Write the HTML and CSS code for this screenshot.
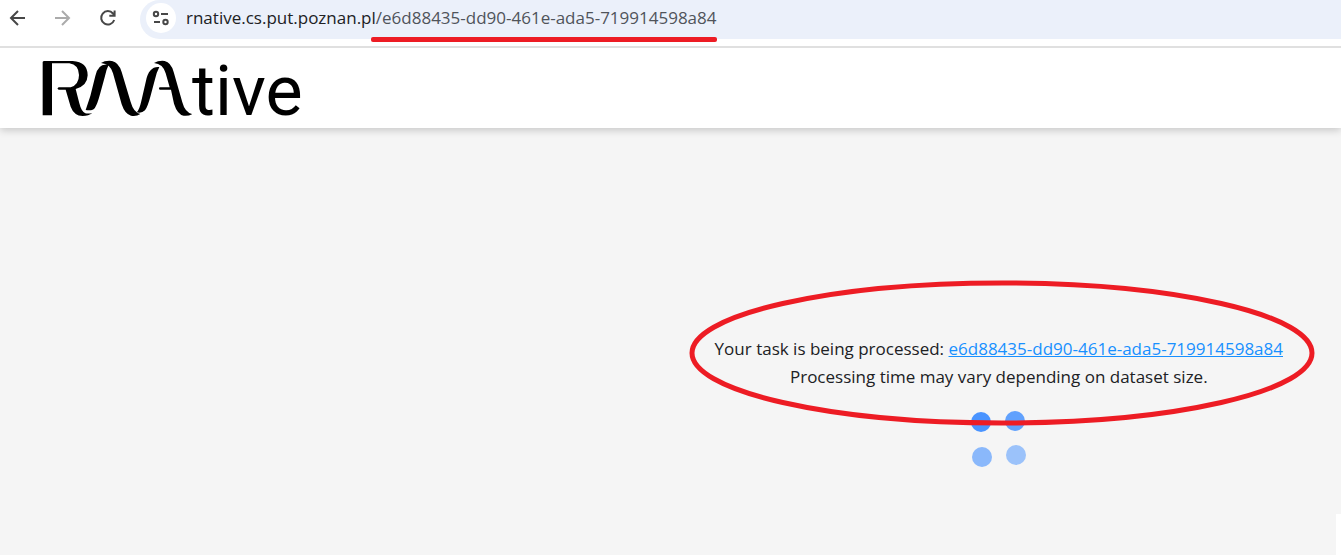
FILE: index.html
```html
<!DOCTYPE html>
<html lang="en">
<head>
<meta charset="utf-8">
<title>RNAtive</title>
<link rel="stylesheet" href="styles.css">
</head>
<body>
<div class="toolbar">
  <div class="nav">
    <button class="nav-button" aria-label="Back"><svg width="18" height="18" viewBox="0 0 18 18"><path d="M16 9H3M9 2L2 9L9 16"/></svg></button>
    <button class="nav-button forward" aria-label="Forward"><svg width="18" height="18" viewBox="0 0 18 18"><path d="M1 9H14M8 2L15 9L8 16"/></svg></button>
    <button class="nav-button" aria-label="Reload"><svg width="18" height="18" viewBox="0 0 18 18"><path d="M15.200 11A6.700 6.700 0 1 1 14 4.500L15.500 6.500M15.600 1.500V6.800H10.300"/></svg></button>
  </div>
  <div class="address">
    <button class="site-info" aria-label="Site information"><svg width="18" height="18" viewBox="0 0 18 18"><circle cx="4" cy="5" r="2.200"/><path d="M9 5H16M2 13H8"/><circle cx="13.500" cy="13" r="2.200"/></svg></button>
    <div class="url">rnative.cs.put.poznan.pl<span class="path">/e6d88435-dd90-461e-ada5-719914598a84</span></div>
  </div>
</div>
<header class="header">
  <a class="logo" href="#" aria-label="RNAtive">
    <svg class="logo-mark" width="150" height="57" viewBox="36 30 450 171" aria-hidden="true">
      <path d="M38 36Q38 33 44 33H128Q173 36 173 76Q172 108 137 117L148 160Q154 185 166 190Q176 192 187 189Q176 198 158 198Q132 197 122 170L107 119H86Q79 116 86 112H122Q147 104 147 75Q146 44 118 40H66V196H38Z"/>
      <path d="M167 180L181 138L196 78Q204 38 236 44Q229 58 225 78L210 133Q202 163 195 173Q188 184 167 180Z"/>
      <path d="M213 39Q225 31 246 33Q266 37 275 66L302 156Q311 188 331 192Q319 200 303 197Q285 193 275 163L249 70Q241 41 213 39Z"/>
      <path d="M320 187Q328 180 334 153L348 92Q357 48 388 51Q380 66 375 88L361 140Q353 170 345 181Q335 191 320 187Z"/>
      <path d="M372 39Q386 31 404 33Q423 37 431 66L457 157Q465 188 487 192Q475 199 461 197Q442 193 432 161L423 119H389Q385 115 389 112H419L407 70Q399 41 372 39Z"/>
    </svg>
    <span class="logo-text">tive</span>
  </a>
</header>
<main class="content">
  <section class="status">
    <p class="message">Your task is being processed: <a class="task-link" href="#">e6d88435-dd90-461e-ada5-719914598a84</a></p>
    <p class="message">Processing time may vary depending on dataset size.</p>
    <svg class="spinner" width="60" height="60" viewBox="0 0 60 60" role="img" aria-label="Loading">
      <circle cx="12" cy="14" r="10" fill="#4a94ff"/><circle cx="46" cy="13" r="10" fill="#61a1fd"/>
      <circle cx="13" cy="49" r="10" fill="#8ab8fb"/><circle cx="47" cy="47" r="10" fill="#9bc2fa"/>
    </svg>
    <svg class="ring" viewBox="0 0 626 146" aria-hidden="true"><ellipse cx="313" cy="73" rx="310" ry="70"/></svg>
  </section>
  <div class="corner"></div>
</main>
</body>
</html>
```

FILE: styles.css
```css
* { box-sizing: border-box; }
body {
  margin: 0;
  min-height: 100vh;
  display: flex;
  flex-direction: column;
  background: #fff;
  color: #202124;
  font: 17px/28px "Open Sans", "Noto Sans", sans-serif;
}
button { border: 0; padding: 0; background: none; }
svg { display: block; }
.toolbar {
  display: flex;
  height: 48px;
  padding-bottom: 7px;
  border-bottom: 2px solid #e0e0e0;
}
.nav { display: flex; gap: 27px; padding: 0 23px 4px 9px; align-items: center; }
.nav-button svg, .site-info svg { fill: none; stroke: #474747; stroke-width: 2; }
.nav-button.forward svg { stroke: #ababab; }
.address {
  flex: 1;
  display: flex;
  align-items: center;
  gap: 10px;
  padding: 0 6px 3px;
  background: #ebf0fa;
  border-radius: 20px 0 0 20px;
}
.site-info {
  display: grid;
  place-items: center;
  width: 30px;
  height: 30px;
  border-radius: 50%;
  background: #fff;
}
.url { position: relative; }
.path { color: #50545a; }
.path::after {
  content: "";
  position: absolute;
  right: 0;
  bottom: -10px;
  width: 346px;
  height: 5px;
  border-radius: 2px;
  background: #ed1c24;
}
.header {
  position: relative;
  z-index: 1;
  padding: 12px 42px;
  background: #fff;
  box-shadow: 0 2px 8px rgba(0, 0, 0, .2);
  clip-path: inset(0 0 -12px 0);
}
.logo { display: flex; height: 56px; color: #000; text-decoration: none; }
.logo-text { font: 400 70px/62px Roboto, sans-serif; }
.content {
  position: relative;
  flex: 1;
  display: flex;
  justify-content: flex-end;
  padding: 207px 58px 0;
  background: #f5f5f5;
}
.status {
  position: relative;
  display: flex;
  flex-direction: column;
  align-items: center;
  align-self: flex-start;
}
.message { margin: 0; }
.task-link { color: #1890ff; }
.spinner { margin-top: 17px; }
.ring {
  position: absolute;
  left: -26px;
  top: -55px;
  width: 626px;
  fill: none;
  stroke: #ed1c24;
  stroke-width: 5;
}
.corner {
  position: absolute;
  right: 0;
  bottom: 0;
  width: 5px;
  height: 41px;
  background: #fff;
}
```
